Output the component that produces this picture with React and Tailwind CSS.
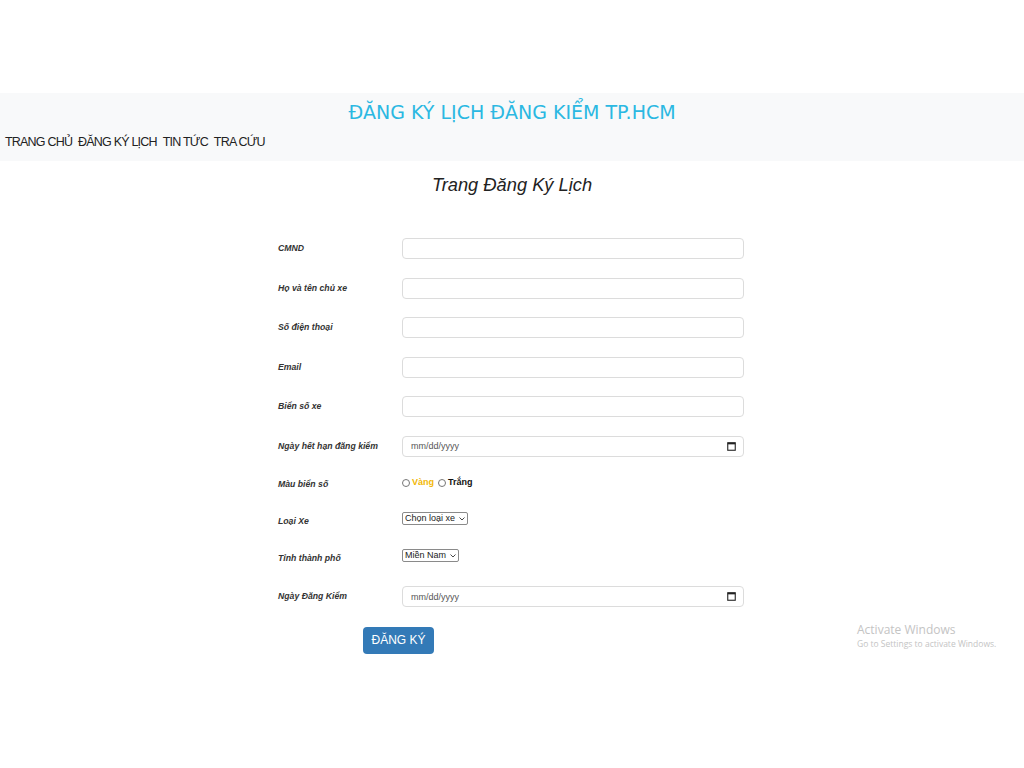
import { useState } from "react";

const fields = [
  { label: "CMND", type: "text" },
  { label: "Họ và tên chủ xe", type: "text" },
  { label: "Số điện thoại", type: "text" },
  { label: "Email", type: "text" },
  { label: "Biển số xe", type: "text" },
  { label: "Ngày hết hạn đăng kiểm", type: "date" },
];

function Label({ children }) {
  return (
    <div className="w-[124px] shrink-0 text-[8.7px] font-bold italic text-[#333]">
      {children}
    </div>
  );
}

function CalendarIcon() {
  return (
    <svg width="9" height="9" viewBox="0 0 9 9" className="pointer-events-none absolute right-[8px] top-[6px]">
      <rect x="0.75" y="0.75" width="7.5" height="7.5" fill="none" stroke="#222" strokeWidth="1.1" />
      <rect x="0.75" y="0.75" width="7.5" height="1.6" fill="#222" />
    </svg>
  );
}

function TextRow({ label, type }) {
  return (
    <div className="flex h-[39.5px] items-center">
      <Label>{label}</Label>
      <div className="relative">
        <input
          type="text"
          placeholder={type === "date" ? "mm/dd/yyyy" : ""}
          className="block h-[21px] w-[342px] rounded-[4px] border border-[#dcdcdc] bg-white px-[8px] text-[9px] text-[#555] outline-none placeholder:text-[#555]"
        />
        {type === "date" && <CalendarIcon />}
      </div>
    </div>
  );
}

function Select({ options }) {
  return (
    <div className="relative -mt-[6px]">
      <select className="block h-[13px] appearance-none rounded-[2px] border border-[#8a8a8a] bg-white pl-[2px] pr-[11px] text-[9px] leading-[11px] text-[#222] outline-none">
        {options.map((o) => (
          <option key={o}>{o}</option>
        ))}
      </select>
      <svg width="6" height="4" viewBox="0 0 6 4" className="pointer-events-none absolute right-[3px] top-[5px]">
        <path d="M0.5 0.5 L3 3 L5.5 0.5" fill="none" stroke="#333" strokeWidth="0.9" />
      </svg>
    </div>
  );
}

export default function App() {
  const [color, setColor] = useState("");

  return (
    <div className="relative min-h-[768px] w-full bg-white font-['Liberation_Sans',Arial,sans-serif]">
      <div className="h-[93px]" />

      {/* header */}
      <header className="bg-[#f8f9fa] pt-[7px] pb-[11px]">
        <h1 className="text-center font-['DejaVu_Sans',Verdana,sans-serif] text-[19px] leading-[24px] text-[#2bb8e2]">
          ĐĂNG KÝ LỊCH ĐĂNG KIỂM TP.HCM
        </h1>
        <nav className="mt-[11px] flex gap-[6px] pl-[5px] text-[12.5px] leading-[15px] tracking-[-0.8px] text-[#222]">
          <a href="#">TRANG CHỦ</a>
          <a href="#">ĐĂNG KÝ LỊCH</a>
          <a href="#">TIN TỨC</a>
          <a href="#">TRA CỨU</a>
        </nav>
      </header>

      <h2 className="mt-[13px] text-center text-[18.3px] italic leading-[21px] text-[#222]">
        Trang Đăng Ký Lịch
      </h2>

      {/* form */}
      <form className="mt-[34px] ml-[278px] w-[466px]">
        {fields.map((f) => (
          <TextRow key={f.label} label={f.label} type={f.type} />
        ))}

        <div className="flex h-[37px] items-center">
          <Label>Màu biển số</Label>
          <div className="-mt-[4px] flex items-center gap-[2px] text-[9px] font-bold">
            <input
              type="radio"
              name="mau"
              checked={color === "vang"}
              onChange={() => setColor("vang")}
              className="h-[8px] w-[8px]"
            />
            <span className="text-[#f2b705]">Vàng</span>
            <input
              type="radio"
              name="mau"
              checked={color === "trang"}
              onChange={() => setColor("trang")}
              className="ml-[2px] h-[8px] w-[8px]"
            />
            <span className="text-[#111]">Trắng</span>
          </div>
        </div>

        <div className="flex h-[37px] items-center">
          <Label>Loại Xe</Label>
          <Select options={["Chọn loại xe", "Xe con", "Xe tải"]} />
        </div>

        <div className="flex h-[37px] items-center">
          <Label>Tỉnh thành phố</Label>
          <Select options={["Miền Nam", "Miền Bắc"]} />
        </div>

        <TextRow label="Ngày Đăng Kiểm" type="date" />

        <button
          type="button"
          className="mt-[10px] ml-[85px] h-[27px] w-[71px] rounded-[4px] bg-[#337ab7] text-[12px] text-white"
        >
          ĐĂNG KÝ
        </button>
      </form>

      {/* windows watermark */}
      <div className="pointer-events-none absolute left-[857px] top-[622px] font-['Open_Sans',sans-serif] text-[#c4c4c4]">
        <div className="text-[12px] leading-[16px]">Activate Windows</div>
        <div className="text-[8.5px] leading-[12px]">Go to Settings to activate Windows.</div>
      </div>
    </div>
  );
}
